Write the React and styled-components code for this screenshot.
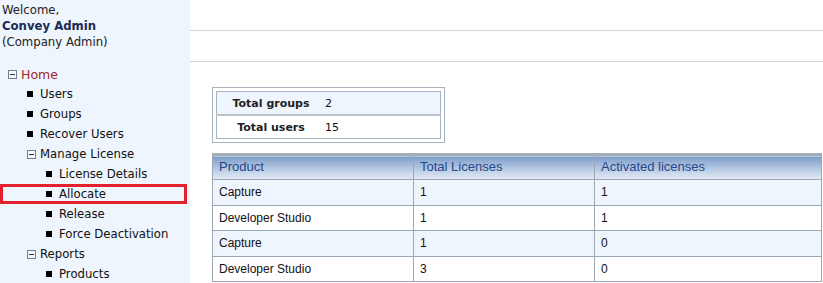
import styled, { createGlobalStyle } from "styled-components"

const GlobalStyle = createGlobalStyle`
  body {
    margin: 0;
    background: #fff;
  }
`

const Page = styled.div`
  display: flex;
  width: 823px;
  height: 283px;
  overflow: hidden;
`

const Sidebar = styled.div`
  width: 190px;
  flex-shrink: 0;
  background: #eef5fd;
  font-family: "DejaVu Sans", Tahoma, sans-serif;
  font-size: 11.7px;
  color: #111;
  padding-top: 2px;
  box-sizing: border-box;
`

const Welcome = styled.div`
  padding-left: 2px;
  line-height: 16px;
  color: #222;
`

const UserName = styled.div`
  font-weight: bold;
  color: #1b2a55;
`

const Tree = styled.ul`
  list-style: none;
  margin: 14px 0 0;
  padding: 0;
`

const Node = styled.li`
  display: flex;
  align-items: center;
  height: 20px;
  box-sizing: border-box;
  padding-left: ${({ level }) => 8 + level * 19}px;
  color: ${({ root }) => (root ? "#9c2a2c" : "#111")};
  font-size: ${({ root }) => (root ? "12.5px" : "11.7px")};
  ${({ selected }) =>
    selected &&
    `
    border: 3px solid #e3202b;
    margin-right: 3px;
  `}
`

const Square = styled.span`
  width: 6px;
  height: 6px;
  background: #000;
  margin-right: 7px;
  margin-left: ${({ offset }) => offset || 0}px;
`

const MinusBox = () => (
  <svg width="9" height="9" viewBox="0 0 9 9" style={{ marginRight: 4 }}>
    <rect x="0.5" y="0.5" width="8" height="8" fill="#f3f6fa" stroke="#6f7f94" />
    <rect x="2" y="4" width="5" height="1" fill="#333" />
  </svg>
)

const Main = styled.div`
  flex: 1;
  display: flex;
  flex-direction: column;
`

const Band = styled.div`
  height: 30px;
  border-bottom: 1px solid #d2d2d2;
  flex-shrink: 0;
`

const Content = styled.div`
  padding: 25px 1px 0 22px;
  font-family: "Liberation Sans", Arial, sans-serif;
  font-size: 12px;
`

const SummaryBox = styled.div`
  width: 233px;
  box-sizing: border-box;
  border: 1px solid #a7b2bc;
  padding: 3px;
`

const SummaryTable = styled.table`
  width: 100%;
  border-collapse: collapse;
  border: 1px solid #a4b3c2;
  font-family: "DejaVu Sans", Tahoma, sans-serif;
  font-size: 11px;
`

const SummaryRow = styled.tr`
  background: ${({ shade }) => (shade ? "#eef5fd" : "#fff")};
  border-bottom: 2px solid #b6c3cf;
  &:last-child {
    border-bottom: none;
  }
`

const SummaryLabel = styled.th`
  width: 108px;
  height: 22px;
  padding: 0;
  text-align: center;
  font-weight: bold;
  color: #222;
`

const SummaryValue = styled.td`
  padding: 0;
  color: #111;
`

const DataTable = styled.table`
  margin-top: 10px;
  width: 100%;
  border-collapse: collapse;
  border: 1px solid #9aa7b4;
  border-top: 3px solid #a4aeb8;
`

const HeadCell = styled.th`
  height: 20px;
  padding: 0 6px 3px;
  text-align: left;
  font-weight: normal;
  font-size: 13px;
  color: #27478c;
  border-right: 1px solid #9aa7b4;
  background: linear-gradient(#7d9cca, #c7d6ea 70%, #e3ebf5);
`

const Row = styled.tr`
  background: ${({ shade }) => (shade ? "#eef5fd" : "#fff")};
`

const Cell = styled.td`
  height: 24.5px;
  padding: 0 6px;
  color: #111;
  border: 1px solid #9aa7b4;
  width: ${({ w }) => w || "auto"};
`

const menu = [
  { label: "Home", level: 0, group: true, root: true },
  { label: "Users", level: 1 },
  { label: "Groups", level: 1 },
  { label: "Recover Users", level: 1 },
  { label: "Manage License", level: 1, group: true },
  { label: "License Details", level: 2 },
  { label: "Allocate", level: 2, selected: true },
  { label: "Release", level: 2 },
  { label: "Force Deactivation", level: 2 },
  { label: "Reports", level: 1, group: true },
  { label: "Products", level: 2 },
]

const rows = [
  ["Capture", "1", "1"],
  ["Developer Studio", "1", "1"],
  ["Capture", "1", "0"],
  ["Developer Studio", "3", "0"],
]

const App = () => {
  return (
    <Page>
      <GlobalStyle />
      <Sidebar>
        <Welcome>
          Welcome,
          <UserName>Convey Admin</UserName>
          (Company Admin)
        </Welcome>
        <Tree>
          {menu.map((item) => (
            <Node
              key={item.label}
              level={item.level}
              root={item.root}
              selected={item.selected}
            >
              {item.group ? <MinusBox /> : <Square offset={item.selected ? -3 : 0} />}
              {item.label}
            </Node>
          ))}
        </Tree>
      </Sidebar>
      <Main>
        <Band />
        <Band />
        <Content>
          <SummaryBox>
            <SummaryTable>
              <tbody>
                <SummaryRow shade>
                  <SummaryLabel>Total groups</SummaryLabel>
                  <SummaryValue>2</SummaryValue>
                </SummaryRow>
                <SummaryRow>
                  <SummaryLabel>Total users</SummaryLabel>
                  <SummaryValue>15</SummaryValue>
                </SummaryRow>
              </tbody>
            </SummaryTable>
          </SummaryBox>
          <DataTable>
            <thead>
              <tr>
                <HeadCell>Product</HeadCell>
                <HeadCell>Total Licenses</HeadCell>
                <HeadCell>Activated licenses</HeadCell>
              </tr>
            </thead>
            <tbody>
              {rows.map((r, i) => (
                <Row key={i} shade={i % 2 === 0}>
                  <Cell w="188px">{r[0]}</Cell>
                  <Cell w="168px">{r[1]}</Cell>
                  <Cell>{r[2]}</Cell>
                </Row>
              ))}
            </tbody>
          </DataTable>
        </Content>
      </Main>
    </Page>
  )
}

export default App
